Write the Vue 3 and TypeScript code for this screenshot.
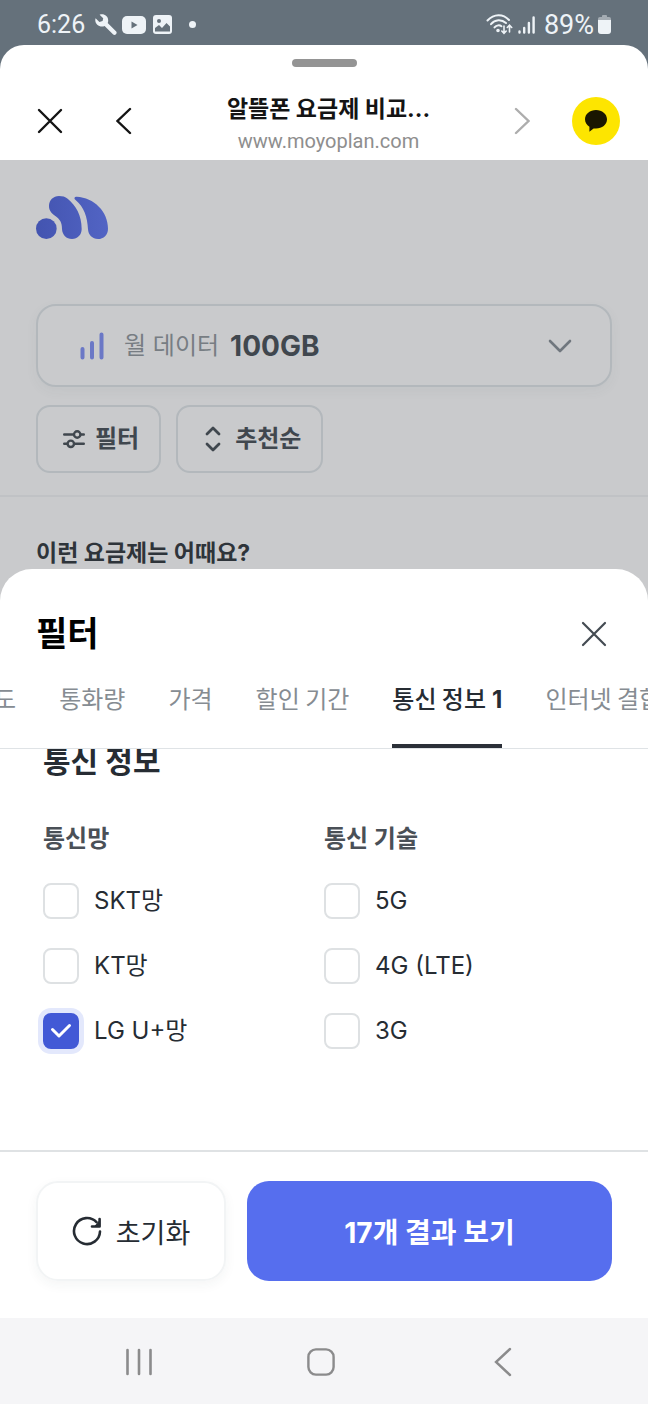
<script setup lang="ts">
import { computed, ref } from 'vue'

interface Option {
  id: string
  label: string
  checked: boolean
}

interface Group {
  title: string
  options: Option[]
}

const tabs = ['속도', '통화량', '가격', '할인 기간', '통신 정보', '인터넷 결합']
const activeTab = ref('통신 정보')

const groups = ref<Group[]>([
  {
    title: '통신망',
    options: [
      { id: 'net-skt', label: 'SKT망', checked: false },
      { id: 'net-kt', label: 'KT망', checked: false },
      { id: 'net-lgu', label: 'LG U+망', checked: true },
    ],
  },
  {
    title: '통신 기술',
    options: [
      { id: 'tech-5g', label: '5G', checked: false },
      { id: 'tech-4g', label: '4G (LTE)', checked: false },
      { id: 'tech-3g', label: '3G', checked: false },
    ],
  },
])

const selectedCount = computed(
  () => groups.value.flatMap((g) => g.options).filter((o) => o.checked).length,
)

function reset(): void {
  groups.value.forEach((g) => g.options.forEach((o) => (o.checked = false)))
}
</script>

<template>
  <div class="screen">
    <div class="status">
      <div class="status-side">
        <span class="clock">6:26</span>
        <svg class="wrench" width="22" height="22" viewBox="0 0 22 22">
          <path
            d="M0.6 4.2 L4.4 8 L7.6 7 L8.2 4.2 L4.6 0.8 C8.6 -0.8 13.2 2 13.2 6.4 C13.2 7.4 13 8.2 12.7 9 L21.2 17.4 C22.6 19 20.4 22.2 18.2 20.6 L9.6 12 C4.6 14.2 -1.2 9.6 0.6 4.2 Z"
            fill="#eef3f7"
          />
        </svg>
        <svg class="tube" width="24" height="18" viewBox="0 0 24 18">
          <rect width="24" height="18" rx="5" fill="#eef3f7" />
          <path d="M9.5 5.5 L15.5 9 L9.5 12.5 Z" fill="#65717b" />
        </svg>
        <svg class="photo" width="19" height="19" viewBox="0 0 19 19">
          <rect width="19" height="19" rx="3" fill="#eef3f7" />
          <circle cx="6" cy="6" r="2" fill="#65717b" />
          <path d="M2 16.5 V13 L6 10 L9 13 L13.5 8 L17 11.5 V16.5 Z" fill="#65717b" />
        </svg>
        <span class="dot"></span>
      </div>
      <div class="status-side">
        <svg width="27" height="21" viewBox="0 0 27 21" fill="none" stroke="#eef3f7" stroke-width="2" stroke-linecap="round">
          <path d="M1.5 6.5 C8 -0.5 17 -0.5 23 6" />
          <path d="M5 10.2 C9 5.2 15.5 5 20 9" />
          <path d="M8.5 13.4 C10.5 11 13.5 10.8 15.5 12.2" />
          <circle cx="12" cy="16.5" r="0.8" fill="#eef3f7" />
          <path d="M18 12 V19 M15.8 17 L18 19.4 L20.2 17 M23.5 18 V11.5 M21.3 13.5 L23.5 11.2 L25.7 13.5" stroke-width="1.6" />
        </svg>
        <svg class="signal" width="17" height="18" viewBox="0 0 17 18" stroke="#eef3f7" stroke-width="2.4" stroke-linecap="round">
          <path d="M1.5 15.5 V16.5 M6.2 12 V16.5 M10.9 7 V16.5 M15.6 1.5 V16.5" />
        </svg>
        <span class="percent">89%</span>
        <svg width="13" height="19" viewBox="0 0 13 19">
          <rect x="4" y="0" width="5" height="4" rx="1" fill="#a4acb3" />
          <rect x="0" y="2" width="13" height="6" rx="2" fill="#a4acb3" />
          <path d="M0 5 H13 V16 Q13 19 10 19 H3 Q0 19 0 16 Z" fill="#eef3f7" />
        </svg>
      </div>
    </div>

    <header class="browser">
      <div class="handle"></div>
      <div class="bar">
        <button type="button" class="icon-btn" aria-label="닫기">
          <svg width="26" height="26" viewBox="0 0 26 26" fill="none" stroke="#141414" stroke-width="2.4" stroke-linecap="round">
            <path d="M2 2 L24 24 M24 2 L2 24" />
          </svg>
        </button>
        <button type="button" class="icon-btn" aria-label="뒤로">
          <svg width="16" height="28" viewBox="0 0 16 28" fill="none" stroke="#141414" stroke-width="2.4" stroke-linecap="round">
            <path d="M14 2 L1.5 14 L14 26" />
          </svg>
        </button>
        <div class="site">
          <div class="site-title">알뜰폰 요금제 비교...</div>
          <div class="site-url">www.moyoplan.com</div>
        </div>
        <button type="button" class="icon-btn" aria-label="앞으로">
          <svg width="16" height="28" viewBox="0 0 16 28" fill="none" stroke="#adadad" stroke-width="2.4" stroke-linecap="round">
            <path d="M2 2 L14.5 14 L2 26" />
          </svg>
        </button>
        <button type="button" class="icon-btn talk" aria-label="카카오톡">
          <svg width="22" height="22" viewBox="0 0 22 22">
            <path d="M11 0 C17 0 22 4 22 9.3 C22 14.6 17 18.6 11 18.6 C10.2 18.6 9.4 18.5 8.6 18.4 L4.4 21.8 V16.8 C1.7 15.1 0 12.5 0 9.3 C0 4 5 0 11 0 Z" fill="#1a1600" />
          </svg>
        </button>
      </div>
    </header>

    <section class="page">
      <div class="page-top">
        <svg class="logo" width="72" height="43" viewBox="108 78 216 129" role="img" aria-label="모요">
          <defs>
            <linearGradient id="logo-fill" x1="108" y1="0" x2="324" y2="0" gradientUnits="userSpaceOnUse">
              <stop offset="0" stop-color="#4354b0" />
              <stop offset="1" stop-color="#5264c4" />
            </linearGradient>
          </defs>
          <g fill="url(#logo-fill)">
            <circle cx="139" cy="176" r="31" />
            <path d="M177 78 C160 78 147 91 147 108 C147 122 155 130 166 138 C180 148 186 158 186 177 C187 195 199 207 216 207 C233 207 245 194 245 177 C245 135 228 107 203 86 C196 80 187 78 177 78 Z" />
            <path d="M230 80 C282 83 324 124 324 176 C324 194 311 207 294 207 C277 207 265 195 264 178 C262 140 253 112 226 89 C221 84 224 80 230 80 Z" />
          </g>
        </svg>

        <button type="button" class="data-select">
          <svg width="24" height="28" viewBox="0 0 24 28" stroke="#6b78c6" stroke-width="4" stroke-linecap="round">
            <path d="M2.5 17 V25.5 M12 11 V25.5 M21.5 2.5 V25.5" />
          </svg>
          <span class="data-label">월 데이터</span>
          <span class="data-value">100GB</span>
          <svg class="caret" width="24" height="14" viewBox="0 0 24 14" fill="none" stroke="#70777e" stroke-width="2.6" stroke-linecap="round" stroke-linejoin="round">
            <path d="M2 2 L12 12 L22 2" />
          </svg>
        </button>

        <div class="chips">
          <button type="button" class="chip">
            <svg width="22" height="20" viewBox="0 0 22 20" fill="none" stroke="#40474e" stroke-width="2.4" stroke-linecap="round">
              <path d="M1.2 5.5 H10.5 M18 5.5 H20.8 M1.2 14.8 H4 M11.5 14.8 H20.8" />
              <circle cx="14.2" cy="5.5" r="3.2" />
              <circle cx="7.8" cy="14.8" r="3.2" />
            </svg>
            <span>필터</span>
          </button>
          <button type="button" class="chip sort">
            <svg width="16" height="26" viewBox="0 0 16 26" fill="none" stroke="#40474e" stroke-width="2.8" stroke-linecap="round" stroke-linejoin="round">
              <path d="M2 8 L8 2 L14 8 M2 18 L8 24 L14 18" />
            </svg>
            <span>추천순</span>
          </button>
        </div>
      </div>
      <h2 class="suggest">이런 요금제는 어때요?</h2>
    </section>

    <section class="sheet">
      <div class="sheet-head">
        <h1>필터</h1>
        <button type="button" class="sheet-close" aria-label="필터 닫기">
          <svg width="26" height="26" viewBox="0 0 26 26" fill="none" stroke="#444b52" stroke-width="2.2" stroke-linecap="round">
            <path d="M2 2 L24 24 M24 2 L2 24" />
          </svg>
        </button>
      </div>

      <nav class="tabs">
        <div class="tab-track">
          <button
            v-for="tab in tabs"
            :key="tab"
            type="button"
            class="tab"
            :class="{ active: tab === activeTab }"
            @click="activeTab = tab"
          >
            <span>{{ tab }}</span>
            <b v-if="tab === '통신 정보' && selectedCount">{{ selectedCount }}</b>
          </button>
        </div>
      </nav>

      <div class="content">
        <h2 class="content-title">통신 정보</h2>
        <div class="groups">
          <fieldset v-for="group in groups" :key="group.title" class="group">
            <legend>{{ group.title }}</legend>
            <div class="options">
              <label v-for="o in group.options" :key="o.id" class="option" :for="o.id">
                <span class="box">
                  <input :id="o.id" v-model="o.checked" type="checkbox" />
                  <svg v-if="o.checked" width="22" height="16" viewBox="0 0 22 16" fill="none" stroke="#fff" stroke-width="3" stroke-linecap="round" stroke-linejoin="round">
                    <path d="M2.5 6.5 L9 13 L19.5 2.5" />
                  </svg>
                </span>
                <span>{{ o.label }}</span>
              </label>
            </div>
          </fieldset>
        </div>
      </div>

      <div class="actions">
        <button type="button" class="reset" @click="reset">
          <svg width="30" height="30" viewBox="0 0 30 30" fill="none" stroke="#262c33" stroke-width="2.6" stroke-linecap="round" stroke-linejoin="round">
            <path d="M28 15.5 A13 13 0 1 1 24.5 6.2" />
            <path d="M27.6 3 V10.5 H20" />
            <path d="M27 5.5 L23 10 H27 Z" fill="#262c33" stroke-width="1" />
          </svg>
          <span>초기화</span>
        </button>
        <button type="button" class="submit">17개 결과 보기</button>
      </div>
    </section>

    <nav class="system">
      <button type="button" aria-label="최근 앱">
        <svg width="28" height="28" viewBox="0 0 28 28" stroke="#8b8b8c" stroke-width="2.6" stroke-linecap="round">
          <path d="M2.5 2 V26 M14 2 V26 M25.5 2 V26" />
        </svg>
      </button>
      <button type="button" aria-label="홈">
        <svg width="28" height="28" viewBox="0 0 28 28" fill="none" stroke="#8b8b8c" stroke-width="2.4">
          <rect x="1.4" y="1.4" width="25.2" height="25.2" rx="7.5" />
        </svg>
      </button>
      <button type="button" aria-label="뒤로 가기">
        <svg width="18" height="30" viewBox="0 0 18 30" fill="none" stroke="#8b8b8c" stroke-width="2.4" stroke-linecap="round">
          <path d="M16 2 L2 15 L16 28" />
        </svg>
      </button>
    </nav>
  </div>
</template>

<style>
body {
  margin: 0;
  background: #65717b;
}
</style>

<style scoped>
.screen {
  display: flex;
  flex-direction: column;
  min-height: 100vh;
  overflow: hidden;
  font-family: Inter, 'Noto Sans CJK KR', sans-serif;
  color: #262c33;
}

.screen * {
  box-sizing: border-box;
}

svg {
  display: block;
  flex: none;
}

button {
  margin: 0;
  padding: 0;
  border: 0;
  background: none;
  font: inherit;
  color: inherit;
  cursor: pointer;
  white-space: nowrap;
}

h1,
h2 {
  margin: 0;
}

.status {
  display: flex;
  justify-content: space-between;
  height: 45px;
  padding: 4px 37px 0;
  color: #eef3f7;
  font-family: Roboto, sans-serif;
  line-height: 32px;
}

.status-side {
  display: flex;
  align-items: center;
}

.clock {
  font-size: 25px;
}

.wrench {
  margin-left: 10px;
}

.tube {
  margin-left: 5px;
}

.photo {
  margin-left: 7px;
}

.dot {
  width: 7px;
  height: 7px;
  margin-left: 17px;
  border-radius: 50%;
  background: #eef3f7;
}

.signal {
  margin-left: 5px;
}

.percent {
  margin: 0 4px 0 9px;
  font-size: 27px;
}

.browser {
  padding-top: 14px;
  border-radius: 24px 24px 0 0;
  background: #fff;
}

.handle {
  width: 65px;
  height: 8px;
  margin: 0 auto;
  border-radius: 4px;
  background: #949494;
}

.bar {
  display: flex;
  align-items: center;
  gap: 26px;
  height: 79px;
  margin-top: 14px;
  padding: 0 28px 0 26px;
}

.icon-btn {
  display: grid;
  place-items: center;
  flex: none;
  width: 48px;
  height: 48px;
}

.talk {
  border-radius: 50%;
  background: #fde500;
}

.site {
  flex: 1;
  min-width: 0;
  padding: 6px 0 0 11px;
  text-align: center;
  white-space: nowrap;
}

.site-title {
  font-size: 23px;
  font-weight: 700;
  line-height: 34px;
  color: #141414;
}

.site-url {
  font-family: Roboto, sans-serif;
  font-size: 20px;
  line-height: 30px;
  color: #8e8e8e;
}

.page {
  padding-bottom: 32px;
  background: #c9cacc;
  color: #40474e;
}

.page-top {
  padding: 36px 36px 22px;
  border-bottom: 2px solid #c0c2c5;
}

.data-select {
  display: flex;
  align-items: center;
  width: 100%;
  height: 83px;
  margin-top: 65px;
  padding: 0 38px 0 42px;
  border: 2px solid #b3b8bc;
  border-radius: 20px;
  box-shadow: 0 4px 12px rgba(90, 95, 110, 0.06);
  line-height: 36px;
}

.data-label {
  margin-left: 20px;
  font-size: 24px;
  color: #777d83;
}

.data-value {
  margin-left: 11px;
  font-size: 28px;
  font-weight: 700;
}

.caret {
  margin-left: auto;
}

.chips {
  display: flex;
  gap: 15px;
  margin-top: 18px;
}

.chip {
  display: flex;
  align-items: center;
  gap: 10px;
  height: 68px;
  padding: 0 20px 0 25px;
  border: 2px solid #b3b8bc;
  border-radius: 14px;
  font-size: 24px;
  font-weight: 700;
  line-height: 32px;
}

.sort {
  gap: 14px;
  padding-left: 27px;
}

.suggest {
  margin-top: 40px;
  padding: 0 36px;
  font-size: 23px;
  font-weight: 700;
  line-height: 32px;
  color: #2e343a;
}

.sheet {
  position: relative;
  display: flex;
  flex: 1;
  flex-direction: column;
  margin-top: -32px;
  border-radius: 32px 32px 0 0;
  background: #fff;
}

.sheet-head {
  display: flex;
  align-items: center;
  justify-content: space-between;
  padding: 35px 36px 0;
}

.sheet-head h1 {
  font-size: 34px;
  font-weight: 700;
  line-height: 60px;
  color: #000;
}

.sheet-close {
  display: grid;
  place-items: center;
  width: 36px;
  height: 36px;
}

.tabs {
  overflow: hidden;
  border-bottom: 1px solid #dfe3e6;
}

.tab-track {
  display: flex;
  gap: 43px;
  margin-left: -28px;
}

.tab {
  display: flex;
  flex: none;
  align-items: baseline;
  gap: 6px;
  padding: 18px 0 30px;
  border-bottom: 4px solid transparent;
  font-family: 'Noto Sans CJK KR', sans-serif;
  font-size: 24px;
  line-height: 32px;
  color: #868c92;
}

.tab b {
  font-family: Inter, sans-serif;
  line-height: 28px;
}

.tab.active {
  border-color: #2b3038;
  font-weight: 500;
  color: #262c33;
}

.content {
  flex: 1;
  overflow: hidden;
  padding: 0 43px 40px;
}

.content-title {
  margin-top: -8px;
  font-size: 30px;
  font-weight: 700;
  line-height: 40px;
}

.groups {
  display: grid;
  grid-template-columns: 1fr 1fr;
  margin-top: 42px;
}

.group {
  min-width: 0;
  margin: 0;
  padding: 0;
  border: 0;
}

.group legend {
  padding: 0;
  font-size: 24px;
  font-weight: 700;
  line-height: 32px;
  color: #4a5057;
}

.options {
  display: flex;
  flex-direction: column;
  gap: 29px;
  margin-top: 28px;
}

.option {
  display: flex;
  align-items: center;
  gap: 15px;
  font-size: 24px;
  line-height: 36px;
  cursor: pointer;
}

.box {
  display: grid;
  place-items: center;
}

.box > * {
  grid-area: 1 / 1;
}

.box svg {
  z-index: 1;
  pointer-events: none;
}

.box input {
  width: 36px;
  height: 36px;
  margin: 0;
  border: 2px solid #dee1e3;
  border-radius: 8px;
  background: #fff;
  appearance: none;
}

.box input:checked {
  border-color: #4259d6;
  background: #4259d6;
  box-shadow: 0 0 0 5px #e3e8fc;
}

.actions {
  display: flex;
  gap: 21px;
  padding: 29px 36px 37px;
  border-top: 2px solid #dfe2e4;
}

.reset,
.submit {
  height: 100px;
  border-radius: 22px;
  font-size: 28px;
}

.reset {
  display: flex;
  align-items: center;
  justify-content: center;
  gap: 14px;
  width: 190px;
  border: 2px solid #f2f4f5;
  box-shadow: 0 4px 12px rgba(40, 60, 60, 0.05);
  font-size: 27px;
}

.submit {
  flex: 1;
  background: #566eee;
  font-weight: 700;
  color: #fff;
}

.system {
  display: grid;
  grid-template-columns: repeat(3, 1fr);
  height: 86px;
  padding: 2px 54px 0 48px;
  background: #f5f5f7;
}

.system button {
  display: grid;
  place-items: center;
}
</style>
